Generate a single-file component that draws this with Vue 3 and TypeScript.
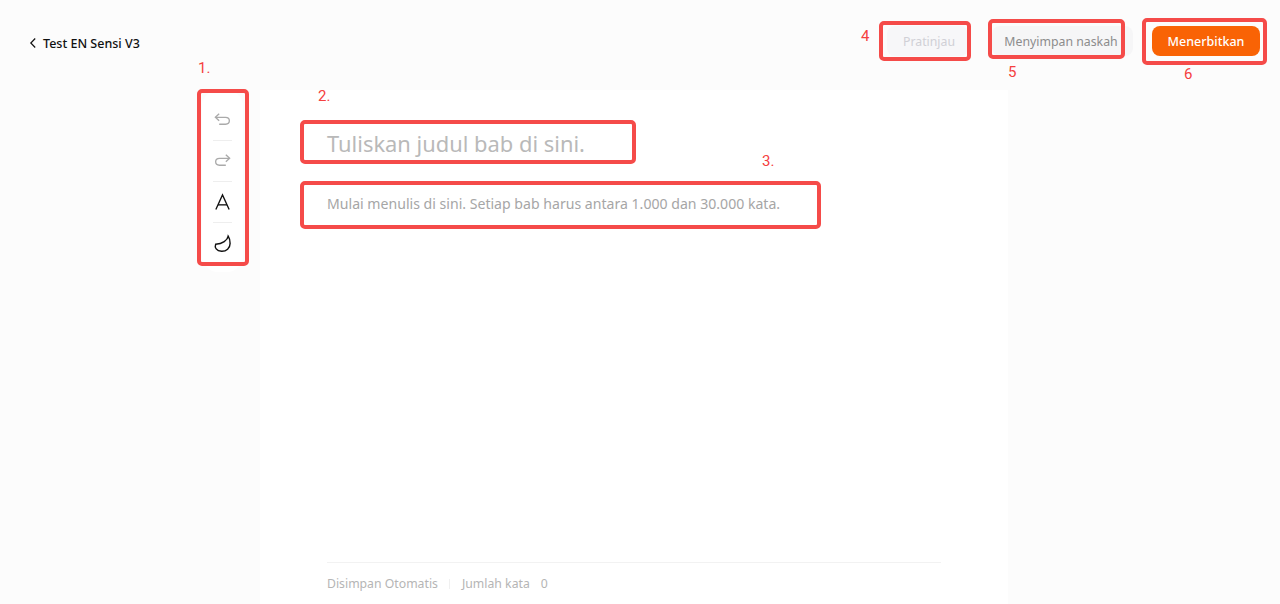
<script setup lang="ts">
interface Mark { label: string; x: number; y: number }
interface Box { x: number; y: number; w: number; h: number }
const marks: Mark[] = [
  { label: '1.', x: 198, y: 59 },
  { label: '2.', x: 318, y: 87 },
  { label: '3.', x: 762, y: 152 },
  { label: '4', x: 861, y: 27 },
  { label: '5', x: 1008, y: 63 },
  { label: '6', x: 1184, y: 65 },
]
const boxes: Box[] = [
  { x: 197, y: 89, w: 52, h: 177 },
  { x: 300, y: 120, w: 336, h: 44 },
  { x: 300, y: 181, w: 521, h: 48 },
  { x: 879, y: 21, w: 92, h: 40 },
  { x: 988, y: 19, w: 137, h: 40 },
  { x: 1142, y: 18, w: 125, h: 47 },
]
</script>

<template>
  <div class="page">
    <header class="top">
      <div class="back">
        <svg width="8" height="12" viewBox="0 0 8 12" fill="none"><path d="M6.200 1.500 1.800 6l4.400 4.500" stroke="#111" stroke-width="1.200" /></svg>
        <span>Test EN Sensi V3</span>
      </div>
      <div class="actions">
        <button class="btn preview">Pratinjau</button>
        <button class="btn save">Menyimpan naskah</button>
        <button class="btn publish">Menerbitkan</button>
      </div>
    </header>
    <main class="body">
      <aside class="tools">
        <div class="tool">
          <svg width="20" height="20" viewBox="0 0 20 20" fill="none" stroke="#aaa" stroke-width="1.400"><path d="M6.500 3.500 2.500 7.200l4 3.600" /><path d="M2.800 7.200h10.400c2.400 0 4 1.500 4 3.700s-1.600 3.600-4 3.600H6.500" /></svg>
        </div>
        <div class="tool">
          <svg width="20" height="20" viewBox="0 0 20 20" fill="none" stroke="#aaa" stroke-width="1.400"><path d="m13.500 3.500 4 3.700-4 3.600" /><path d="M17.200 7.200H6.800c-2.400 0-4 1.500-4 3.700s1.600 3.600 4 3.600h6.700" /></svg>
        </div>
        <div class="tool">
          <svg width="20" height="20" viewBox="0 0 20 20" fill="none" stroke="#111" stroke-width="1.400"><path d="M3 18 10 2.500 17 18" /><path d="M5.300 13h9.400" /></svg>
        </div>
        <div class="tool">
          <svg width="20" height="20" viewBox="0 0 20 20" fill="none" stroke="#111" stroke-width="1.500"><path d="M16 1.800C15.300 6 10 10 2.800 10.300 1.500 13.500 3.500 17.500 9 17.700c5 .2 9-3.400 9-8.200 0-3-.7-5.700-2-7.700Z" /></svg>
        </div>
      </aside>
      <section class="paper">
        <h1 class="title">Tuliskan judul bab di sini.</h1>
        <p class="hint">Mulai menulis di sini. Setiap bab harus antara 1.000 dan 30.000 kata.</p>
        <footer class="foot">
          <span>Disimpan Otomatis</span>
          <i class="sep"></i>
          <span>Jumlah kata</span>
          <span class="count">0</span>
        </footer>
      </section>
    </main>
    <div v-for="(b, i) in boxes" :key="i" class="box" :style="{ left: b.x + 'px', top: b.y + 'px', width: b.w + 'px', height: b.h + 'px' }"></div>
    <div v-for="m in marks" :key="m.label" class="mark" :style="{ left: m.x + 'px', top: m.y + 'px' }">{{ m.label }}</div>
  </div>
</template>

<style>
html, body { margin: 0; background: #fcfcfc; }
</style>

<style scoped>
.page {
  position: relative;
  width: 1280px;
  height: 604px;
  overflow: hidden;
  background: #fcfcfc;
  font-family: "Noto Sans", "Open Sans", sans-serif;
  box-sizing: border-box;
}
.top {
  height: 90px;
  box-sizing: border-box;
  padding: 26px 20px 0 29px;
  display: flex;
  justify-content: space-between;
  align-items: flex-start;
}
.back {
  display: flex;
  align-items: center;
  gap: 6px;
  height: 34px;
  font-size: 12.500px;
  font-weight: 500;
  color: #111;
}
.actions { display: flex; gap: 19px; }
.btn {
  height: 30px;
  border: 0;
  border-radius: 8px;
  font: inherit;
  font-size: 12.300px;
  padding: 0;
}
.preview { width: 81px; background: #f7f7f9; color: #d0d0d6; padding-left: 3px; margin-right: 5px; }
.save { width: 141px; background: #f6f6f7; color: #8c8c8c; padding-right: 3px; padding-left: 0; }
.publish { width: 108px; background: #f96305; color: #fff; font-weight: 500; font-size: 12.500px; }
.body { display: flex; height: 514px; padding-left: 202px; }
.tools {
  width: 41px;
  height: 182px;
  margin-right: 17px;
  background: #fff;
  border-radius: 16px;
  display: flex;
  flex-direction: column;
  align-items: center;
  padding-top: 10px;
  box-sizing: border-box;
}
.tool {
  width: 19px;
  height: 41px;
  display: flex;
  align-items: center;
  justify-content: center;
  border-bottom: 1px solid #eeeeee;
  box-sizing: border-box;
}
.tool:last-child { border-bottom: 0; }
.paper {
  width: 748px;
  background: #fff;
  padding: 0 67px;
  box-sizing: border-box;
  display: flex;
  flex-direction: column;
}
.title {
  margin: 36px 0 0;
  font-size: 21.900px;
  line-height: 36px;
  font-weight: 400;
  color: #b9b9b9;
}
.hint {
  margin: 31px 0 0;
  font-size: 14.100px;
  line-height: 22px;
  color: #a6a6a6;
}
.foot {
  margin-top: auto;
  height: 41px;
  border-top: 1px solid #f2f2f2;
  display: flex;
  align-items: center;
  font-size: 12.250px;
  color: #b5b5b5;
}
.sep { width: 1px; height: 10px; background: #f0f0f0; margin: 0 12px 0 11px; }
.count { margin-left: 11px; }
.box {
  position: absolute;
  box-sizing: border-box;
  border: 4px solid #f54b49;
  border-radius: 5px;
}
.mark {
  position: absolute;
  font-family: "Roboto", sans-serif;
  font-size: 15px;
  line-height: 18px;
  color: #f54040;
}
</style>
